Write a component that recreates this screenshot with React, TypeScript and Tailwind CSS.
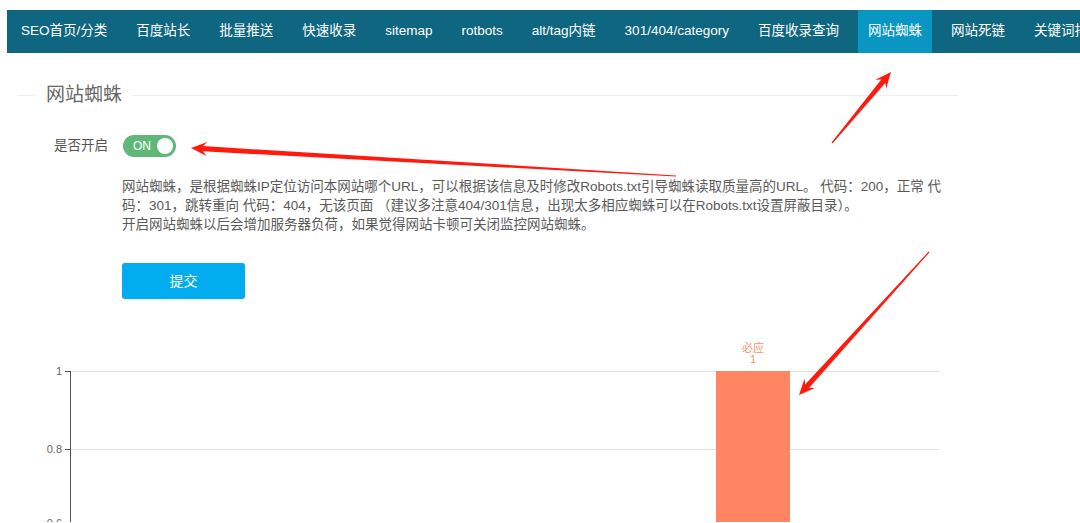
import React from 'react';

const navItems = [
  'SEO首页/分类',
  '百度站长',
  '批量推送',
  '快速收录',
  'sitemap',
  'rotbots',
  'alt/tag内链',
  '301/404/category',
  '百度收录查询',
  '网站蜘蛛',
  '网站死链',
  '关键词排名',
];

const font = { fontFamily: '"Liberation Sans", "Noto Sans CJK SC", sans-serif' };

// tapered annotation arrow, tail -> tip
function arrowPoints(tx: number, ty: number, hx: number, hy: number) {
  const len = Math.hypot(hx - tx, hy - ty);
  const dx = (hx - tx) / len;
  const dy = (hy - ty) / len;
  const nx = -dy;
  const ny = dx;
  const headLen = 16;
  const headW = 7;
  const neck = 12;
  const shaftW = 2.6;
  const tailW = 0.6;
  const p = (x: number, y: number) => `${x.toFixed(1)},${y.toFixed(1)}`;
  const bx = hx - dx * headLen;
  const by = hy - dy * headLen;
  const nkx = hx - dx * neck;
  const nky = hy - dy * neck;
  return [
    p(tx + nx * tailW, ty + ny * tailW),
    p(nkx + nx * shaftW, nky + ny * shaftW),
    p(bx + nx * headW, by + ny * headW),
    p(hx, hy),
    p(bx - nx * headW, by - ny * headW),
    p(nkx - nx * shaftW, nky - ny * shaftW),
    p(tx - nx * tailW, ty - ny * tailW),
  ].join(' ');
}

const Arrows = () => (
  <svg className="absolute left-0 top-0 pointer-events-none" width={1080} height={523}>
    <polygon points={arrowPoints(676, 176, 191, 148)} fill="#ff1a0d" />
    <polygon points={arrowPoints(832, 143, 891, 72)} fill="#ff1a0d" />
    <polygon points={arrowPoints(929, 252, 799, 395)} fill="#ff1a0d" />
  </svg>
);

const Chart = () => (
  <svg width={1080} height={193} className="block" style={font}>
    <line x1={70} y1={42.5} x2={939} y2={42.5} stroke="#e0e0e0" />
    <line x1={70} y1={120.5} x2={939} y2={120.5} stroke="#e0e0e0" />
    <line x1={70} y1={198.5} x2={939} y2={198.5} stroke="#e0e0e0" />
    <rect x={716} y={42} width={74} height={160} fill="#ff8563" />
    <line x1={70.5} y1={42} x2={70.5} y2={193} stroke="#555" />
    <line x1={65} y1={42.5} x2={70} y2={42.5} stroke="#555" />
    <line x1={65} y1={120.5} x2={70} y2={120.5} stroke="#555" />
    <line x1={65} y1={198.5} x2={70} y2={198.5} stroke="#555" />
    <text x={62} y={46} fontSize={11} fill="#666" textAnchor="end">1</text>
    <text x={62} y={124} fontSize={11} fill="#666" textAnchor="end">0.8</text>
    <text x={62} y={198} fontSize={11} fill="#666" textAnchor="end">0.6</text>
    <text x={753} y={23} fontSize={11} fill="#ff8e70" textAnchor="middle">必应</text>
    <text x={753} y={34} fontSize={11} fill="#ff8e70" textAnchor="middle">1</text>
  </svg>
);

export default function App() {
  return (
    <div className="relative w-[1080px] h-[523px] overflow-hidden bg-white" style={font}>
      <nav className="mt-[10px] ml-[7px] h-[43px] bg-[#0f6680] flex items-stretch pl-[4px] gap-[9px] whitespace-nowrap">
        {navItems.map((item) => (
          <div
            key={item}
            className={`flex items-center px-[10px] text-[13.5px] text-white ${
              item === '网站蜘蛛' ? 'bg-[#0996c3]' : ''
            }`}
          >
            {item}
          </div>
        ))}
      </nav>

      <div className="mt-[31px] ml-[17px] w-[941px] flex items-center">
        <div className="w-[19px] h-px bg-[#eeeeee]" />
        <div className="px-[10px] text-[19px] leading-[22px] text-[#666]">网站蜘蛛</div>
        <div className="flex-1 h-px bg-[#eeeeee]" />
      </div>

      <div className="ml-[17px] mt-[29px] flex items-center">
        <div className="w-[106px] pr-[15px] text-right text-[13.5px] text-[#555]">是否开启</div>
        <div className="w-[53px] h-[22px] rounded-full bg-[#5fb878] flex items-center justify-between pl-[10px] pr-[3px]">
          <span className="text-[12px] text-white leading-none">ON</span>
          <span className="w-[16px] h-[16px] rounded-full bg-white" />
        </div>
      </div>

      <div className="ml-[122px] mt-[20px] text-[13.5px] leading-[19px] text-[#5a5a5a] whitespace-nowrap">
        <div>网站蜘蛛，是根据蜘蛛IP定位访问本网站哪个URL，可以根据该信息及时修改Robots.txt引导蜘蛛读取质量高的URL。 代码：200，正常 代</div>
        <div>码：301，跳转重向 代码：404，无该页面 （建议多注意404/301信息，出现太多相应蜘蛛可以在Robots.txt设置屏蔽目录）。</div>
        <div>开启网站蜘蛛以后会增加服务器负荷，如果觉得网站卡顿可关闭监控网站蜘蛛。</div>
      </div>

      <button className="ml-[122px] mt-[29px] w-[123px] h-[36px] rounded-[3px] bg-[#01adee] text-white text-[14px] flex items-center justify-center">
        提交
      </button>

      <div className="mt-[30px]">
        <Chart />
      </div>

      <Arrows />
    </div>
  );
}
